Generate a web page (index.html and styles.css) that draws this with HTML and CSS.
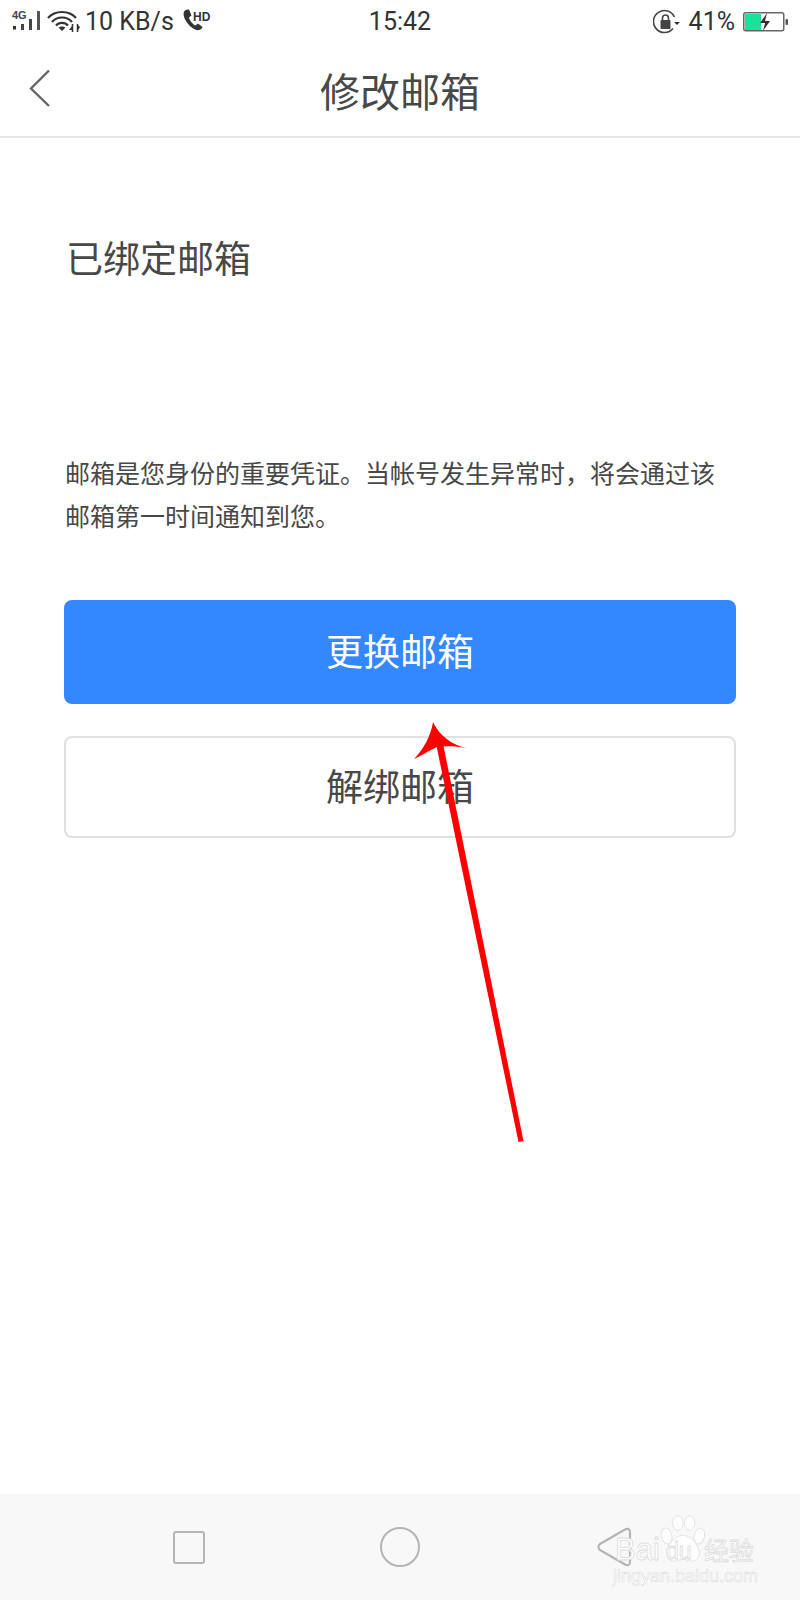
FILE: index.html
```html
<!DOCTYPE html>
<html lang="zh-CN">
<head>
<meta charset="utf-8">
<title>修改邮箱</title>
<link rel="stylesheet" href="styles.css">
</head>
<body>
<div class="page">
  <header class="status">
    <div class="status-left">
      <svg class="signal" width="30" height="24" viewBox="0 0 30 24">
        <text x="0" y="9" class="net">4G</text>
        <rect x="1" y="16" width="3" height="3.500" fill="#333"/>
        <rect x="9" y="14" width="3" height="6" fill="#444"/>
        <rect x="17" y="9" width="3" height="11" fill="#444"/>
        <rect x="25" y="1" width="3" height="19" fill="#555"/>
      </svg>
      <svg class="wifi" width="33" height="24" viewBox="0 0 33 24">
        <g fill="none" stroke="#333" stroke-width="2.200">
          <path d="M1 8C8 0 22 0 29 8"/>
          <path d="M5 12C10 6 20 6 25 12"/>
          <path d="M9 15.500C12 12 18 12 21 15.500"/>
        </g>
        <path d="M11.500 17.500C13.500 16 16.500 16 18.500 17.500L15 21Z" fill="#333"/>
        <path d="M25.500 14v8M30.500 14v8" stroke="#333" stroke-width="1.500"/>
        <path d="M22 20l3-4v4zM33 17l-3-3v8z" fill="#333"/>
      </svg>
      <span class="speed">10 KB/s</span>
      <svg class="call" width="31" height="24" viewBox="0 0 31 24">
        <path d="M3 2.500C1 4 1 8 4 13s9 10 13 9c2-.5 3.500-2 3.500-3l-4.500-3.500-2.500 2c-2-.5-6-5-6.500-8l2.500-2L7 1.500C5.500 1.500 4 1.800 3 2.500Z" fill="#333"/>
        <text x="11" y="13" class="hd">HD</text>
      </svg>
    </div>
    <div class="clock">15:42</div>
    <div class="status-right">
      <svg class="rotate" width="28" height="26" viewBox="0 0 28 26">
        <path d="M20 19.500A11 11 0 1 1 21.500 8" fill="none" stroke="#444" stroke-width="1.600"/>
        <path d="M21 13h6l-3 3z" fill="#333"/>
        <rect x="7.500" y="11" width="10" height="9" rx="1" fill="#444"/>
        <path d="M9.500 11V9a3 3 0 0 1 6 0v2" fill="none" stroke="#444" stroke-width="1.600"/>
      </svg>
      <span class="percent">41%</span>
      <svg class="battery" width="45" height="20" viewBox="0 0 45 20">
        <rect x=".75" y=".75" width="40" height="18" rx="2" fill="#fff" stroke="#666" stroke-width="1.500"/>
        <rect x="2" y="2" width="16" height="16" fill="#1fe09a"/>
        <rect x="42.500" y="7" width="2.500" height="6" rx="1" fill="#555"/>
        <path d="M24 1l-7 10h5l-2 8 7-10h-5z" fill="#333"/>
      </svg>
    </div>
  </header>

  <nav class="navbar">
    <button class="back" aria-label="返回">
      <svg width="22" height="38" viewBox="0 0 22 38"><path d="M20 1.500 2 19.500 20 37" fill="none" stroke="#666" stroke-width="2.400"/></svg>
    </button>
    <h1 class="nav-title">修改邮箱</h1>
  </nav>

  <main class="content">
    <h2 class="bound-title">已绑定邮箱</h2>
    <p class="desc">邮箱是您身份的重要凭证。当帐号发生异常时&#xFF0C;将会通过该邮箱第一时间通知到您。</p>
    <div class="actions">
      <button class="btn btn-primary">更换邮箱</button>
      <button class="btn btn-outline">解绑邮箱</button>
    </div>
  </main>

  <footer class="softkeys">
    <span class="key-square"></span>
    <span class="key-circle"></span>
    <svg class="key-back" width="36" height="40" viewBox="0 0 36 40">
      <path d="M28 2.500 3 17c-2 1.300-2 4.700 0 6l25 14.500c2.500 1.400 5 .5 5-2.500V5c0-3-2.500-3.900-5-2.500Z" fill="none" stroke="#b5b5b5" stroke-width="2.200"/>
    </svg>
  </footer>

  <svg class="arrow" width="800" height="1600" viewBox="0 0 800 1600">
    <path d="M518.500 1142 436.500 746 443.500 746 523.500 1141Z" fill="#fe0000"/>
    <path d="M433 722C439 735 452 745 466 748 455 746 445 746 437 747 430 750 421 756 414 759 424 749 431 735 433 722Z" fill="#fe0000"/>
  </svg>

  <div class="watermark">
    <svg class="paw" width="46" height="50" viewBox="0 0 62 62" preserveAspectRatio="none">
      <g fill="#fdfdfd" stroke="#e2e2e2" stroke-width="1.200">
        <ellipse cx="9" cy="26" rx="7" ry="10" transform="rotate(-15 9 26)"/>
        <ellipse cx="24" cy="10" rx="7" ry="9"/>
        <ellipse cx="40" cy="10" rx="7" ry="9"/>
        <ellipse cx="53" cy="26" rx="7" ry="10" transform="rotate(15 53 26)"/>
        <path d="M31 25c10 0 22 12 22 22 0 8-7 11-12 10-5-1-7-2-10-2s-6 1-10 2c-6 1-12-2-12-10 0-10 12-22 22-22Z"/>
      </g>
    </svg>
    <span class="wm-bai">Bai</span>
    <span class="wm-du">du</span>
    <span class="wm-cn">经验</span>
    <span class="wm-url">jingyan.baidu.com</span>
  </div>
</div>
</body>
</html>
```
FILE: styles.css
```css
* { box-sizing: border-box; }
html, body { margin: 0; padding: 0; background: #fff; }
body { font-family: "Noto Sans CJK SC", "Liberation Sans", sans-serif; color: #3c3c3c; }
.page { position: relative; width: 800px; height: 1600px; display: flex; flex-direction: column; overflow: hidden; background: #fff; }

.status { height: 42px; padding: 2px 12px 0 12px; display: grid; grid-template-columns: 1fr auto 1fr; align-items: center; color: #333; font-family: "Roboto", "Liberation Sans", sans-serif; flex: none; }
.status-left { display: flex; align-items: center; gap: 5px; }
.status-right { display: flex; align-items: center; justify-content: flex-end; gap: 8px; }
.speed { font-size: 25px; line-height: 28px; }
.call { margin-left: 3px; margin-top: -4px; }
.signal, .wifi, .rotate, .battery, .call { display: block; flex: none; }
.clock { font-size: 25px; line-height: 28px; }
.percent { font-size: 25px; line-height: 28px; }
.net { font: 700 11px "Liberation Sans", sans-serif; fill: #444; }
.hd { font: 700 12px "Liberation Sans", sans-serif; fill: #333; }

.navbar { height: 96px; padding-top: 2px; display: flex; align-items: center; justify-content: center; position: relative; border-bottom: 2px solid #e6e6e6; flex: none; }
.back { position: absolute; left: 29px; top: 27px; padding: 0; border: 0; background: none; display: block; line-height: 0; }
.nav-title { margin: 0; font-size: 40px; line-height: 56px; font-weight: 400; color: #484848; }

.content { flex: 1; padding: 94px 64px 0; }
.bound-title { margin: 0; font-size: 37px; line-height: 50px; font-weight: 400; color: #484848; padding-left: 2px; }
.desc { margin: 169px 0 0; font-size: 25px; line-height: 43px; color: #484848; padding-left: 1px; }
.actions { margin-top: 63px; display: flex; flex-direction: column; gap: 32px; }
.btn { display: block; width: 672px; font-family: inherit; font-size: 37px; padding: 0 0 4px; border-radius: 8px; }
.btn-primary { height: 104px; background: #3388ff; color: #fff; border: 0; }
.btn-outline { height: 102px; background: #fff; color: #484848; border: 2px solid #e0e0e0; }

.softkeys { height: 106px; flex: none; background: #f8f8f8; position: relative; }
.key-square { position: absolute; left: 173px; top: 37px; width: 32px; height: 33px; border: 2px solid #b5b5b5; border-radius: 3px; }
.key-circle { position: absolute; left: 380px; top: 33px; width: 40px; height: 40px; border: 2px solid #b5b5b5; border-radius: 50%; }
.key-back { position: absolute; left: 597px; top: 33px; }

.arrow { position: absolute; left: 0; top: 0; pointer-events: none; }

.watermark { position: absolute; left: 600px; top: 1510px; width: 170px; height: 80px; color: #fff; font-family: "Liberation Sans", sans-serif; }
.paw { position: absolute; left: 60px; top: 5px; }
.wm-bai, .wm-du, .wm-cn, .wm-url { position: absolute; -webkit-text-stroke: .8px #dcdcdc; white-space: nowrap; }
.wm-bai { left: 15px; top: 21px; font-size: 31px; line-height: 38px; }
.wm-du { left: 66px; top: 28px; font-size: 23px; line-height: 26px; }
.wm-cn { left: 104px; top: 24px; font-size: 25px; line-height: 30px; font-family: "Noto Sans CJK SC", sans-serif; }
.wm-url { left: 13px; top: 56px; font-size: 18px; line-height: 20px; -webkit-text-stroke: .6px #dedede; }
```
